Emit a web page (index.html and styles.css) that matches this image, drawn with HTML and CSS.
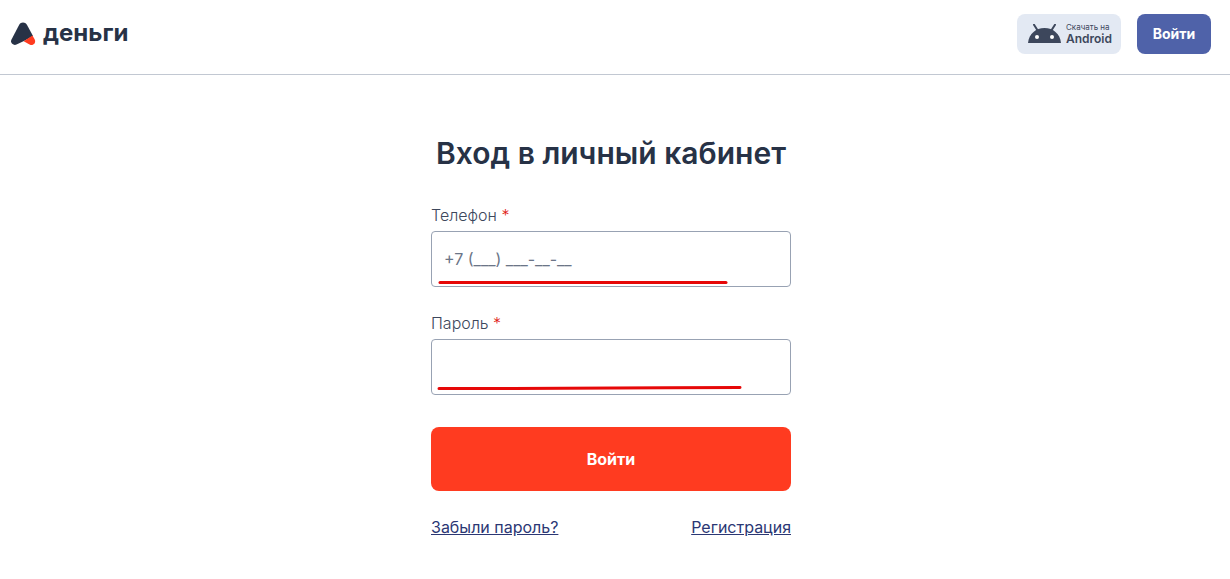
FILE: index.html
```html
<!DOCTYPE html>
<html lang="ru">
<head>
  <meta charset="UTF-8">
  <meta name="viewport" content="width=device-width, initial-scale=1">
  <title>Вход в личный кабинет</title>
  <link rel="stylesheet" href="styles.css">
</head>
<body>
  <header class="header">
    <a class="logo" href="#">
      <svg class="logo-icon" width="26" height="24" viewBox="0 0 26 24" aria-hidden="true">
        <path d="M12 .5 C13.600 .5 15 1.300 15.900 2.800 L22 14 L14 18.500 L5.500 22.600 C2.400 24 -1 21 .4 17.800 L8.200 2.800 C9 1.300 10.400 .5 12 .5 Z" fill="#273246"/>
        <path d="M21.500 13.500 L23.700 17.500 C25.400 21 22 24 19 22.800 L12.700 19.200 Z" fill="#ff3b20"/>
      </svg>
      <span class="logo-text">деньги</span>
    </a>
    <nav class="header-actions">
      <a class="android" href="#">
        <svg class="android-icon" width="33" height="20" viewBox="0 0 33 20" aria-hidden="true">
          <path d="M6 .8 L10 7 M27 .8 L23 7" stroke="#3d475c" stroke-width="2" stroke-linecap="round"/>
          <path d="M0 19 C.8 10 7.800 4 16.500 4 S32.200 10 33 19 Z" fill="#3d475c"/>
          <circle cx="9" cy="13" r="2" fill="#fff"/>
          <circle cx="24" cy="13" r="2" fill="#fff"/>
        </svg>
        <span class="android-text">
          <small>Скачать на</small>
          <b>Android</b>
        </span>
      </a>
      <button class="btn-login" type="button">Войти</button>
    </nav>
  </header>

  <main class="main">
    <form class="login">
      <h1>Вход в личный кабинет</h1>

      <div class="field">
        <label for="phone">Телефон <span class="required">*</span></label>
        <div class="control">
          <input type="tel" id="phone" placeholder="+7 (___) ___-__-__">
          <svg class="underline" viewBox="0 0 360 8" aria-hidden="true">
            <path d="M9 3.500 H295"/>
          </svg>
        </div>
      </div>

      <div class="field">
        <label for="password">Пароль <span class="required">*</span></label>
        <div class="control">
          <input type="password" id="password">
          <svg class="underline" viewBox="0 0 360 8" aria-hidden="true">
            <path d="M8 1.500 L82 1.500 L235 .8 L309 .5"/>
          </svg>
        </div>
      </div>

      <button class="btn-submit" type="submit">Войти</button>

      <div class="links">
        <a href="#">Забыли пароль?</a>
        <a href="#">Регистрация</a>
      </div>
    </form>
  </main>
</body>
</html>
```

FILE: styles.css
```css
* {
  box-sizing: border-box;
}
body {
  margin: 0;
  background: #fff;
  color: #273246;
  font-family: Inter, sans-serif;
  font-size: 16px;
  line-height: 24px;
}
button,
input {
  font: inherit;
}

/* header */
.header {
  display: flex;
  justify-content: space-between;
  align-items: center;
  padding: 14px 19px 20px 11px;
  border-bottom: 1px solid #c2c8d2;
}
.logo {
  display: flex;
  align-items: center;
  gap: 6px;
  color: #273246;
  text-decoration: none;
}
.logo-text {
  padding-bottom: 2px;
  font-size: 24px;
  font-weight: 700;
}
.header-actions {
  display: flex;
  gap: 16px;
}
.android {
  display: flex;
  align-items: center;
  gap: 5px;
  height: 40px;
  padding: 0 9px 0 11px;
  border-radius: 8px;
  background: #e3e9f3;
  color: #3d475c;
  text-decoration: none;
}
.android-text {
  padding-bottom: 2px;
}
.android-text small,
.android-text b {
  display: block;
  line-height: 12px;
}
.android-text small {
  font-size: 8px;
}
.android-text b {
  font-size: 12px;
  font-weight: 600;
}
.btn-login {
  min-width: 74px;
  height: 40px;
  padding: 0 15px;
  border: none;
  border-radius: 8px;
  background: #4f62a9;
  color: #fff;
  font-size: 14px;
  font-weight: 700;
  cursor: pointer;
}

/* login form */
.main {
  padding: 58px 16px 32px 8px;
}
.login {
  max-width: 360px;
  margin: 0 auto;
}
h1 {
  margin: 0 0 30px;
  font-size: 30px;
  font-weight: 600;
  line-height: 40px;
  text-align: center;
}
.field {
  margin-bottom: 24px;
}
.field label {
  display: block;
  margin-bottom: 4px;
  color: #3d475c;
  font-weight: 300;
}
.required {
  color: #e01810;
}
.control {
  position: relative;
}
.control input {
  display: block;
  width: 100%;
  height: 56px;
  padding: 0 12px;
  border: 1px solid #98a2b3;
  border-radius: 4px;
  background: #fff;
  color: #273246;
}
.control input::placeholder {
  color: #6b7587;
  opacity: 1;
}
.underline {
  position: absolute;
  left: 0;
  bottom: 0;
  width: 100%;
  overflow: visible;
  pointer-events: none;
  fill: none;
  stroke: #e60808;
  stroke-width: 3;
  stroke-linecap: round;
}
.btn-submit {
  display: block;
  width: 100%;
  height: 64px;
  margin-top: 32px;
  border: none;
  border-radius: 8px;
  background: #ff3b20;
  color: #fff;
  font-weight: 700;
  cursor: pointer;
}
.links {
  display: flex;
  justify-content: space-between;
  margin-top: 24px;
}
.links a {
  color: #2b3774;
}
```
